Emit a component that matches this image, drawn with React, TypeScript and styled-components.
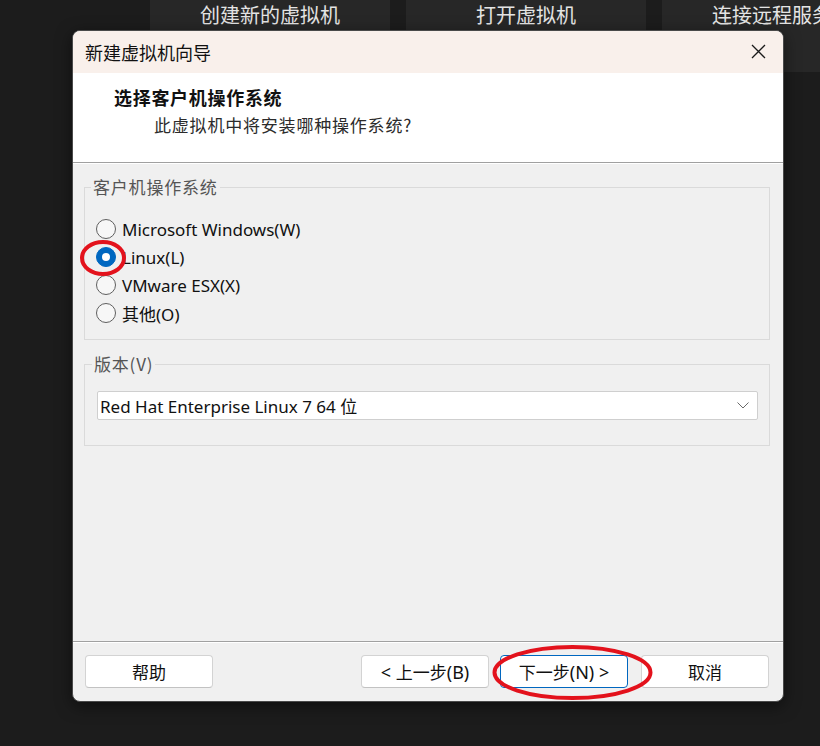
import React from "react";
import styled, { createGlobalStyle } from "styled-components";

const GlobalStyle = createGlobalStyle`
  html, body {
    margin: 0;
    padding: 0;
    background: #1c1c1c;
    width: 820px;
    height: 746px;
    overflow: hidden;
  }
  * {
    box-sizing: border-box;
  }
`;

const uiFont = `"Noto Sans", "Noto Sans CJK SC", sans-serif`;
const cjkFont = `"Noto Sans CJK SC", "Noto Sans", sans-serif`;

const Screen = styled.div`
  position: relative;
  width: 820px;
  height: 746px;
  overflow: hidden;
  background: #1c1c1c;
`;

const Toolbar = styled.div`
  display: flex;
  gap: 16px;
  padding-left: 150px;
  height: 72px;
`;

const Tab = styled.div`
  flex-shrink: 0;
  width: 240px;
  height: 72px;
  background: #272727;
  color: #e4e4e4;
  font-family: ${cjkFont};
  font-size: 20px;
  line-height: 30px;
  text-align: center;
  white-space: nowrap;
`;

const Dialog = styled.div`
  position: absolute;
  left: 72px;
  top: 30px;
  width: 712px;
  height: 672px;
  display: flex;
  flex-direction: column;
  border: 1px solid #4a4a4a;
  border-radius: 8px;
  overflow: hidden;
  background: #f0f0f0;
  box-shadow: 0 4px 16px rgba(0, 0, 0, 0.5);
`;

const TitleBar = styled.div`
  display: flex;
  align-items: center;
  justify-content: space-between;
  height: 42px;
  padding: 0 17px 0 12px;
  background: #f9f0eb;
  color: #111111;
  font-family: ${cjkFont};
  font-size: 18px;
`;

const CloseButton = styled.button`
  display: flex;
  align-items: center;
  justify-content: center;
  width: 16px;
  height: 16px;
  padding: 0;
  border: 0;
  background: none;
  margin-top: -1px;
`;

const Header = styled.div`
  height: 90px;
  padding: 13px 0 0 41px;
  background: #ffffff;
  border-bottom: 1px solid #a0a0a0;
  font-family: ${cjkFont};
`;

const HeaderTitle = styled.div`
  font-size: 18px;
  line-height: 23px;
  font-weight: 700;
  letter-spacing: 0.7px;
  color: #111111;
`;

const HeaderSub = styled.div`
  margin: 5px 0 0 40px;
  font-size: 17px;
  line-height: 22px;
  letter-spacing: 0.8px;
  color: #2b2b2b;
`;

const Body = styled.div`
  flex: 1;
  padding: 0 13px 0 11px;
  box-shadow: inset 0 1px #ffffff;
  font-family: ${uiFont};
`;

const GroupBox = styled.fieldset<{ $top: number; $pad: string }>`
  margin: ${(p) => p.$top}px 0 0 0;
  padding: ${(p) => p.$pad};
  border: 1px solid #dadada;
  min-width: 0;
`;

const Legend = styled.legend`
  margin-left: -5px;
  padding: 0 2px;
  font-family: ${cjkFont};
  font-size: 17px;
  line-height: 20px;
  letter-spacing: 0.8px;
  color: #555555;
`;

const RadioList = styled.div`
  display: flex;
  flex-direction: column;
  padding-top: 18px;
`;

const RadioRow = styled.label`
  display: flex;
  align-items: center;
  gap: 6px;
  height: 28px;
  font-size: 17px;
  color: #111111;
  cursor: default;
`;

const RadioInput = styled.input`
  appearance: none;
  margin: 0;
  width: 20px;
  height: 20px;
  border-radius: 50%;
  border: 1px solid #5f5f5f;
  background: #f7f7f7;
  display: grid;
  place-items: center;

  &:checked {
    border-color: #0067c0;
    background: #0067c0;
  }
  &:checked::after {
    content: "";
    width: 8px;
    height: 8px;
    border-radius: 50%;
    background: #ffffff;
  }
`;

const CjkText = styled.span`
  font-family: ${cjkFont};
`;

const SelectBox = styled.div`
  display: flex;
  align-items: center;
  justify-content: space-between;
  margin-top: 17px;
  height: 29px;
  padding: 0 8px 0 2px;
  background: #ffffff;
  border: 1px solid #cfcfcf;
  border-radius: 2px;
  font-size: 17px;
  color: #111111;
`;

const Footer = styled.div`
  display: flex;
  align-items: flex-start;
  height: 60px;
  padding: 13px 14px 0 12px;
  border-top: 1px solid #a0a0a0;
  box-shadow: inset 0 1px #ffffff;
`;

const NavGroup = styled.div`
  display: flex;
  gap: 11px;
  margin-left: auto;
  margin-right: 13px;
`;

const Button = styled.button<{ $primary?: boolean }>`
  width: 128px;
  height: 33px;
  padding: 0;
  background: #ffffff;
  border: 1px solid ${(p) => (p.$primary ? "#0067c0" : "#d3d3d3")};
  border-bottom-color: ${(p) => (p.$primary ? "#0067c0" : "#c2c2c2")};
  border-radius: 4px;
  font-family: ${uiFont};
  font-size: 18px;
  color: #111111;

  ${CjkText} {
    font-size: 17px;
  }
`;

const Annotation = styled.svg`
  position: absolute;
  pointer-events: none;
  overflow: visible;
`;

const options = [
  { label: "Microsoft Windows(W)", checked: false },
  { label: "Linux(L)", checked: true },
  { label: "VMware ESX(X)", checked: false },
  { label: "其他(O)", checked: false, cjk: true },
];

export default function App() {
  return (
    <>
      <GlobalStyle />
      <Screen>
        <Toolbar>
          <Tab>创建新的虚拟机</Tab>
          <Tab>打开虚拟机</Tab>
          <Tab>连接远程服务器</Tab>
        </Toolbar>

        <Dialog>
          <TitleBar>
            <span>新建虚拟机向导</span>
            <CloseButton aria-label="关闭">
              <svg width="15" height="15" viewBox="0 0 15 15">
                <path d="M1 1 L14 14 M14 1 L1 14" stroke="#1a1a1a" strokeWidth="1.3" />
              </svg>
            </CloseButton>
          </TitleBar>

          <Header>
            <HeaderTitle>选择客户机操作系统</HeaderTitle>
            <HeaderSub>此虚拟机中将安装哪种操作系统?</HeaderSub>
          </Header>

          <Body>
            <GroupBox $top={14} $pad="0 12px 12px 11px">
              <Legend>客户机操作系统</Legend>
              <RadioList>
                {options.map((o) => (
                  <RadioRow key={o.label}>
                    <RadioInput type="radio" name="os" defaultChecked={o.checked} />
                    {o.cjk ? (
                      <span>
                        <CjkText>其他</CjkText>(O)
                      </span>
                    ) : (
                      <span>{o.label}</span>
                    )}
                  </RadioRow>
                ))}
              </RadioList>
            </GroupBox>

            <GroupBox $top={14} $pad="0 11px 25px 12px">
              <Legend>版本(V)</Legend>
              <SelectBox>
                <span>
                  Red Hat Enterprise Linux 7 64 <CjkText>位</CjkText>
                </span>
                <svg width="12" height="7" viewBox="0 0 12 7">
                  <path d="M0.5 0.5 L6 6 L11.5 0.5" fill="none" stroke="#6a6a6a" strokeWidth="1" />
                </svg>
              </SelectBox>
            </GroupBox>
          </Body>

          <Footer>
            <Button>
              <CjkText>帮助</CjkText>
            </Button>
            <NavGroup>
              <Button>
                &lt; <CjkText>上一步</CjkText>(B)
              </Button>
              <Button $primary>
                <CjkText>下一步</CjkText>(N) &gt;
              </Button>
            </NavGroup>
            <Button>
              <CjkText>取消</CjkText>
            </Button>
          </Footer>
        </Dialog>

        <Annotation style={{ left: 80, top: 240 }} width="46" height="36">
          <ellipse cx="23" cy="18" rx="21" ry="16" fill="none" stroke="#e3121c" strokeWidth="4" />
        </Annotation>
        <Annotation style={{ left: 492, top: 645 }} width="161" height="55">
          <ellipse cx="80.5" cy="27.5" rx="78" ry="25.5" fill="none" stroke="#e3121c" strokeWidth="4" />
        </Annotation>
      </Screen>
    </>
  );
}
